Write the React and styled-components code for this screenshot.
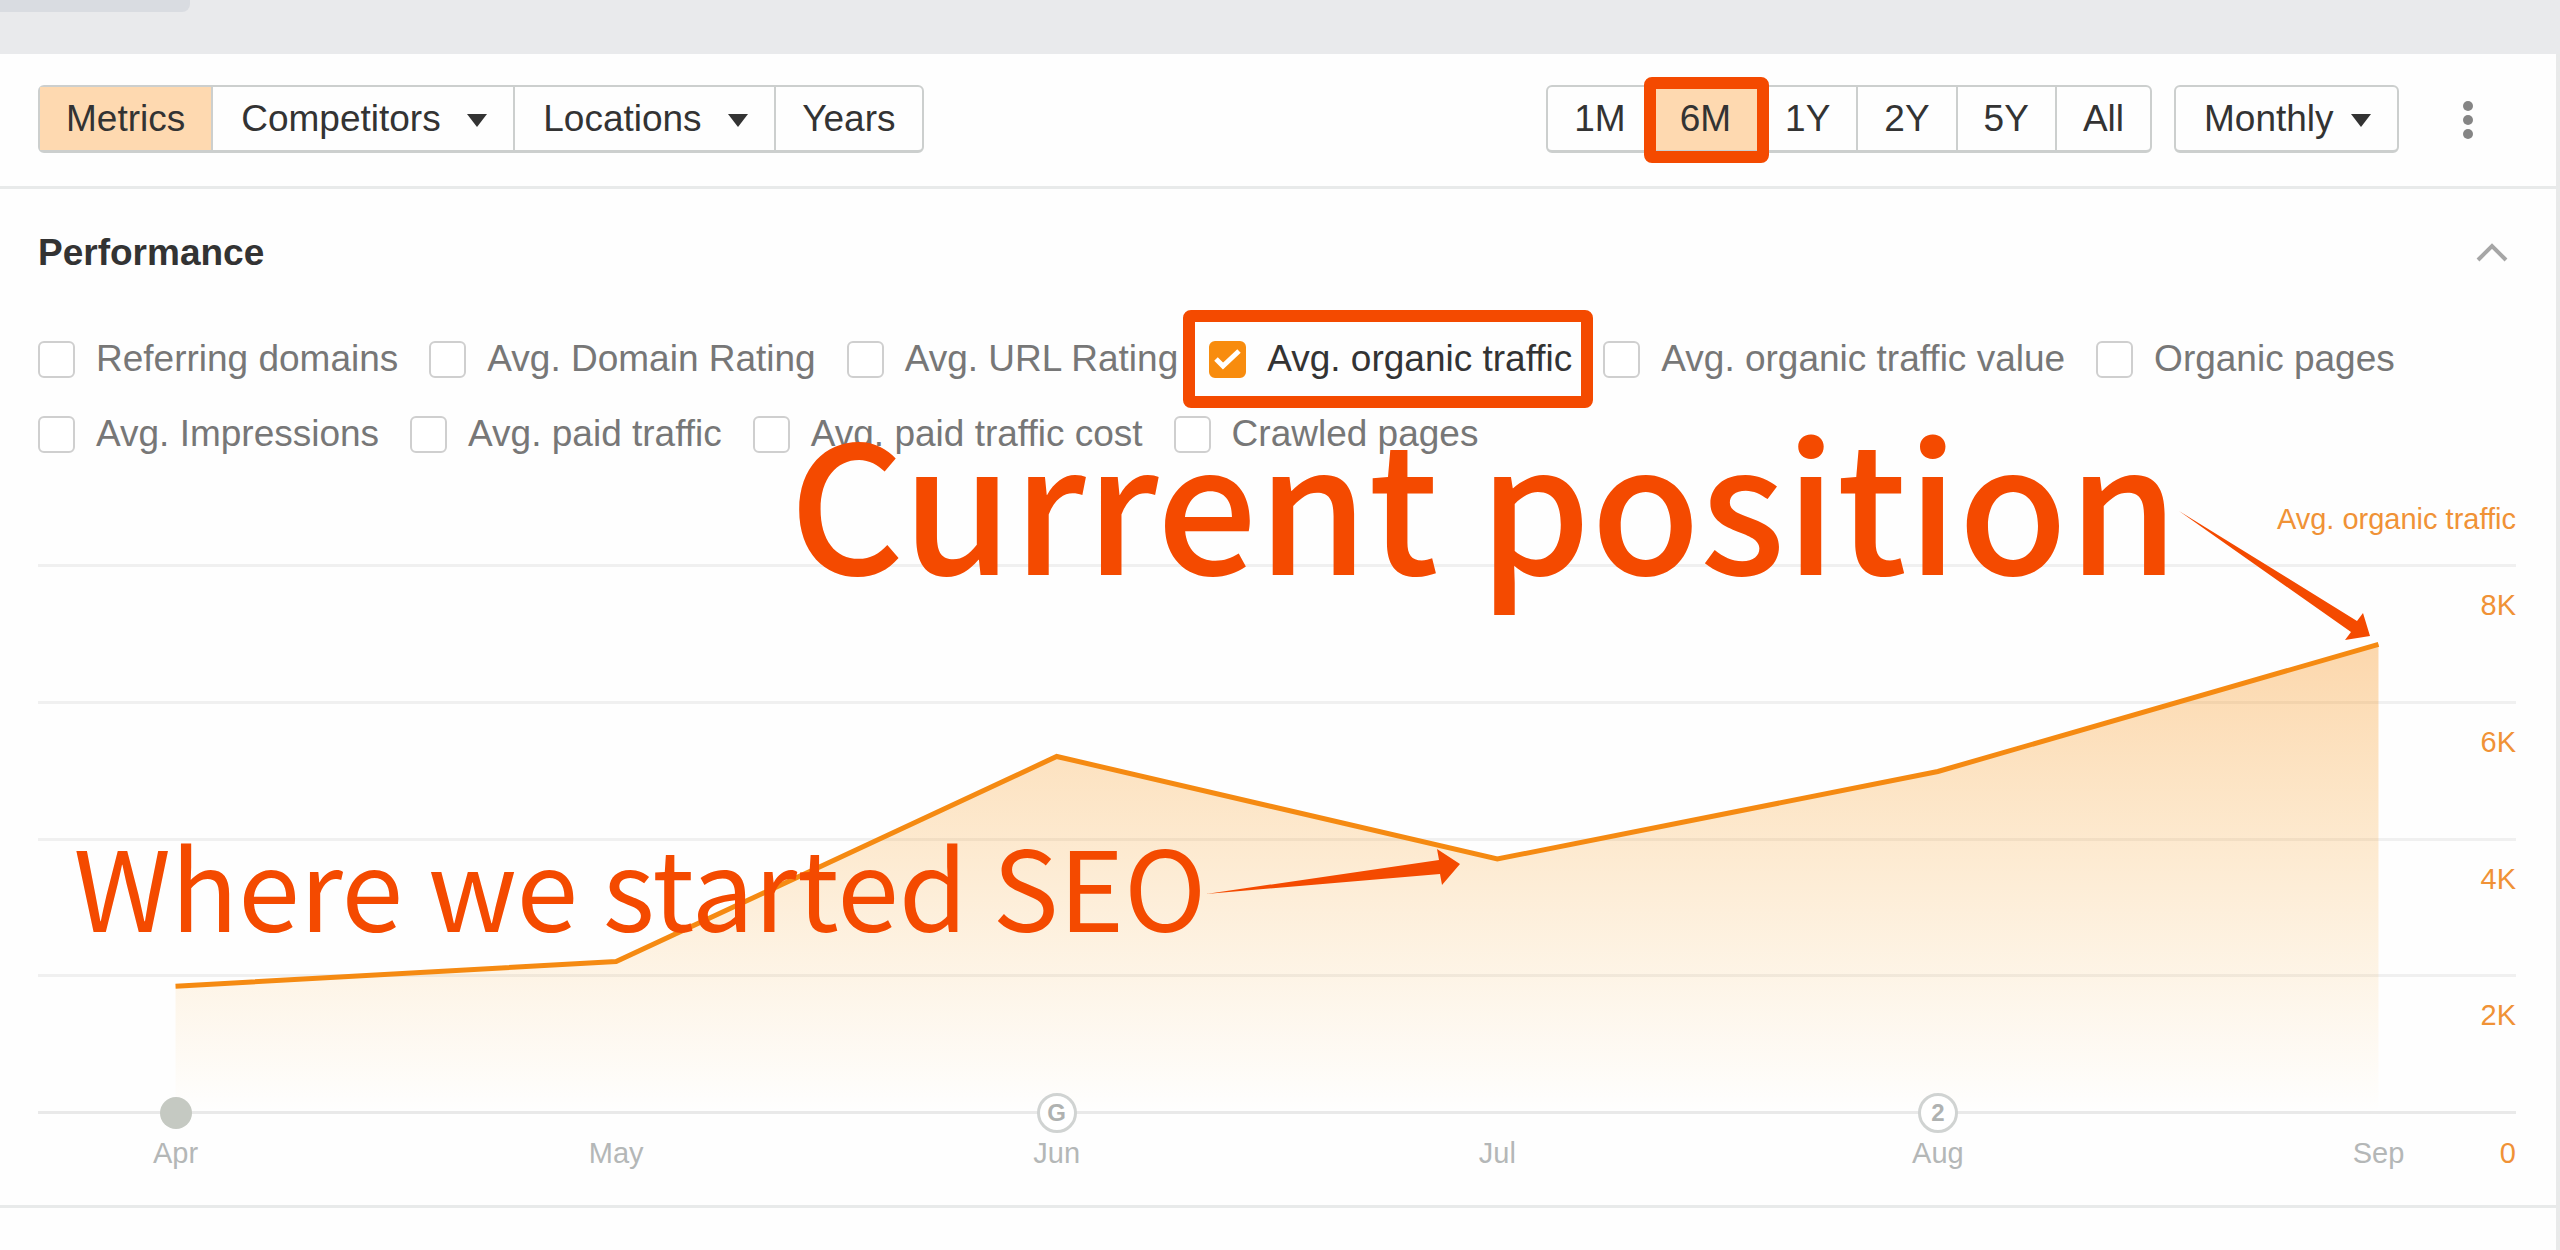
import React, { useState } from 'react';
import styled, { createGlobalStyle, css } from 'styled-components';

const GlobalStyle = createGlobalStyle`
  * {
    box-sizing: border-box;
  }
  body {
    margin: 0;
    background: #fefefe;
    font-family: "Liberation Sans", Arial, sans-serif;
    font-size: 37px;
    line-height: 44px;
    color: #333;
  }
  button, select, input {
    font: inherit;
    color: inherit;
    margin: 0;
  }
`;

const TopBar = styled.div`
  height: 54px;
  background: #e9eaec;
`;

const TopTab = styled.div`
  width: 190px;
  height: 12px;
  background: #d9dce1;
  border-bottom-right-radius: 8px;
`;

const Card = styled.main`
  min-height: calc(100vh - 54px);
  background: #fefefe;
  border-right: 4px solid #e9eaea;
`;

const Toolbar = styled.div`
  display: flex;
  align-items: center;
  padding: 31px 68px 33px 38px;
  border-bottom: 3px solid #e8eaea;
`;

const Group = styled.div`
  display: flex;
  height: 68px;
  border: 2px solid #cccfce;
  border-bottom-width: 3px;
  border-radius: 6px;
  margin-left: ${(props) => props.$push || '0'};
`;

const divided = css`
  & + & {
    border-left: 2px solid #cccfce;
  }
`;

const Cell = styled.div`
  position: relative;
  display: flex;
  ${divided}
`;

const Segment = styled.button`
  padding: 0 26px;
  border: 0;
  background: ${(props) => (props.$active ? '#fed9b0' : 'transparent')};
  cursor: pointer;
`;

const Select = styled.select`
  appearance: none;
  border: 0;
  outline: 0;
  background: transparent;
  padding: 0 ${(props) => (props.$tight ? '63px' : '72px')} 0 28px;
  cursor: pointer;
`;

const CaretIcon = styled.svg`
  position: absolute;
  right: 25px;
  top: 27px;
  width: 22px;
  height: 13px;
  fill: #333;
  pointer-events: none;
`;

const Highlight = styled.span`
  position: absolute;
  z-index: 1;
  inset: ${(props) => props.$inset};
  border: 12px solid #f44a00;
  border-radius: 8px;
  pointer-events: none;
`;

const IconButton = styled.button`
  display: flex;
  padding: 0;
  border: 0;
  background: transparent;
  cursor: pointer;
  margin-left: ${(props) => props.$gap || '0'};
`;

const Section = styled.section`
  padding: 42px 40px 34px 38px;
  border-bottom: 3px solid #e8eaea;
`;

const SectionHead = styled.header`
  display: flex;
  align-items: center;
  justify-content: space-between;
  padding-right: 8px;
`;

const Title = styled.h2`
  margin: 0;
  font-size: 37px;
  font-weight: bold;
`;

const Metrics = styled.div`
  display: flex;
  flex-wrap: wrap;
  gap: 31px;
  margin-top: 62px;
`;

const Metric = styled.label`
  position: relative;
  display: flex;
  align-items: center;
  gap: 21px;
  color: ${(props) => (props.$checked ? '#333' : '#777')};
  cursor: pointer;
`;

const Box = styled.span`
  display: grid;
  width: 37px;
  height: 37px;

  & > * {
    grid-area: 1 / 1;
  }
`;

const Checkbox = styled.input`
  appearance: none;
  width: 37px;
  height: 37px;
  border: 2px solid #cfcfcf;
  border-radius: 6px;
  background: #fff;

  &:checked {
    border-color: #f88c0e;
    background: #f88c0e;
  }
`;

const CheckIcon = styled.svg`
  z-index: 1;
  width: 37px;
  height: 37px;
  fill: none;
  stroke: #fff;
  stroke-width: 5;
  pointer-events: none;
`;

const Legend = styled.div`
  margin-top: 45px;
  font-size: 29px;
  line-height: 36px;
  text-align: right;
  color: #f09236;
`;

const Chart = styled.div`
  position: relative;
  margin-top: 27px;
  font-size: 29px;
  line-height: 36px;
`;

const Plot = styled.div`
  position: relative;
  display: grid;
  grid-template-rows: repeat(4, 1fr);
  height: 547px;
`;

const GridRow = styled.div`
  border-top: 3px solid #f0f0f0;
  padding-top: 20px;
  text-align: right;
  color: #f09236;
`;

const Area = styled.svg`
  position: absolute;
  inset: 1px 0 -1px;
  width: 100%;
  height: 100%;
  overflow: visible;
`;

const Axis = styled.div`
  position: relative;
  display: flex;
  justify-content: space-between;
  padding: 21px 5.55% 0;
  border-top: 3px solid #e9e9e9;
  color: #b4b7b7;
`;

const Tick = styled.div`
  position: relative;
  display: flex;
  justify-content: center;
  width: 0;
`;

const Marker = styled.span`
  position: absolute;
  top: -42px;
  display: flex;
  align-items: center;
  justify-content: center;
  width: 40px;
  height: 40px;
  border: 3px solid #d0d3d2;
  border-radius: 50%;
  background: #fff;
  font-size: 24px;
  font-weight: bold;
  color: #afb2b1;
`;

const Dot = styled.span`
  position: absolute;
  top: -38px;
  width: 32px;
  height: 32px;
  border-radius: 50%;
  background: #c5c9c2;
`;

const Zero = styled.span`
  position: absolute;
  right: 0;
  color: #f09236;
`;

const Callout = styled.div`
  position: absolute;
  top: ${(props) => props.$top};
  right: ${(props) => props.$right};
  display: flex;
  align-items: flex-start;
  font-family: "Noto Sans CJK SC", "Open Sans", sans-serif;
  font-size: ${(props) => props.$size};
  font-weight: ${(props) => props.$weight};
  line-height: 1;
  white-space: nowrap;
  color: #f44a00;
  pointer-events: none;
`;

const Arrow = styled.svg`
  flex: none;
  margin-top: ${(props) => props.$drop};
  fill: #f44a00;
`;

const metrics = [
  'Referring domains',
  'Avg. Domain Rating',
  'Avg. URL Rating',
  'Avg. organic traffic',
  'Avg. organic traffic value',
  'Organic pages',
  'Avg. Impressions',
  'Avg. paid traffic',
  'Avg. paid traffic cost',
  'Crawled pages',
];

const ranges = ['1M', '6M', '1Y', '2Y', '5Y', 'All'];

const traffic = [
  { month: 'Apr', value: 1840, dot: true },
  { month: 'May', value: 2200 },
  { month: 'Jun', value: 5200, marker: 'G' },
  { month: 'Jul', value: 3700 },
  { month: 'Aug', value: 4980, marker: '2' },
  { month: 'Sep', value: 6840 },
];

const MAX = 8000;
const points = traffic.map((item, i) => [5.55 + i * 17.78, 100 - (item.value / MAX) * 100]);
const line = points.map((p) => p.join(',')).join(' ');

const Caret = () => (
  <CaretIcon viewBox="0 0 22 13" aria-hidden="true">
    <path d="M1 0h20L11 13z" />
  </CaretIcon>
);

const Dropdown = ({ label, tight }) => (
  <Cell>
    <Select aria-label={label} $tight={tight}>
      <option>{label}</option>
    </Select>
    <Caret />
  </Cell>
);

const App = () => {
  const [range, setRange] = useState('6M');
  const [selected, setSelected] = useState(['Avg. organic traffic']);

  const toggle = (name) => {
    setSelected(selected.includes(name) ? selected.filter((n) => n !== name) : [...selected, name]);
  };

  return (
    <>
      <GlobalStyle />
      <TopBar>
        <TopTab />
      </TopBar>
      <Card>
        <Toolbar>
          <Group>
            <Cell><Segment $active>Metrics</Segment></Cell>
            <Dropdown label="Competitors" />
            <Dropdown label="Locations" />
            <Cell><Segment>Years</Segment></Cell>
          </Group>
          <Group $push="auto">
            {ranges.map((name) => (
              <Cell key={name}>
                <Segment $active={name === range} onClick={() => setRange(name)}>{name}</Segment>
                {name === '6M' && <Highlight $inset="-10px -12px -13px -10px" />}
              </Cell>
            ))}
          </Group>
          <Group $push="22px">
            <Dropdown label="Monthly" tight />
          </Group>
          <IconButton $gap="49px" aria-label="More">
            <svg width="40" height="44" viewBox="0 0 40 44" fill="#858585">
              <circle cx="20" cy="9" r="5" />
              <circle cx="20" cy="23" r="5" />
              <circle cx="20" cy="37" r="5" />
            </svg>
          </IconButton>
        </Toolbar>

        <Section>
          <SectionHead>
            <Title>Performance</Title>
            <IconButton aria-label="Collapse">
              <svg width="32" height="20" viewBox="0 0 32 20" fill="none" stroke="#a6a6a6" strokeWidth="4">
                <path d="M2 17L16 3l14 14" />
              </svg>
            </IconButton>
          </SectionHead>

          <Metrics>
            {metrics.map((name) => {
              const checked = selected.includes(name);
              return (
                <Metric key={name} $checked={checked}>
                  <Box>
                    <Checkbox type="checkbox" checked={checked} onChange={() => toggle(name)} />
                    {checked && (
                      <CheckIcon viewBox="0 0 37 37">
                        <path d="M7 18l7 7L30 10" />
                      </CheckIcon>
                    )}
                  </Box>
                  {name}
                  {name === 'Avg. organic traffic' && <Highlight $inset="-27px -21px -27px -26px" />}
                </Metric>
              );
            })}
          </Metrics>

          <Legend>Avg. organic traffic</Legend>
          <Chart>
            <Plot>
              {['8K', '6K', '4K', '2K'].map((label) => (
                <GridRow key={label}>{label}</GridRow>
              ))}
              <Area viewBox="0 0 100 100" preserveAspectRatio="none">
                <defs>
                  <linearGradient id="fade" x1="0" y1="0" x2="0" y2="1">
                    <stop offset="0" stopColor="#f88c0e" stopOpacity="0.34" />
                    <stop offset="1" stopColor="#f8a00e" stopOpacity="0" />
                  </linearGradient>
                </defs>
                <polygon points={`5.55,100 ${line} 94.45,100`} fill="url(#fade)" />
                <polyline
                  points={line}
                  fill="none"
                  stroke="#f58a12"
                  strokeWidth="5"
                  vectorEffect="non-scaling-stroke"
                />
              </Area>
            </Plot>
            <Axis>
              {traffic.map((item) => (
                <Tick key={item.month}>
                  {item.dot && <Dot />}
                  {item.marker && <Marker>{item.marker}</Marker>}
                  {item.month}
                </Tick>
              ))}
              <Zero>0</Zero>
            </Axis>

            <Callout $top="-155px" $right="5.9%" $size="178px" $weight="500">
              Current position
              <Arrow $drop="102px" width="191" height="129" viewBox="0 0 191 129">
                <path d="M0 0L178 110l6-8 7 23-25 4 6-8z" />
              </Arrow>
            </Callout>
            <Callout $top="264px" $right="42.6%" $size="111px" $weight="400">
              Where we started SEO
              <Arrow $drop="21px" width="254" height="46" viewBox="0 0 254 46">
                <path d="M0 45L233 11 231 0l23 15-18 21-2-11z" />
              </Arrow>
            </Callout>
          </Chart>
        </Section>
      </Card>
    </>
  );
};

export default App;
